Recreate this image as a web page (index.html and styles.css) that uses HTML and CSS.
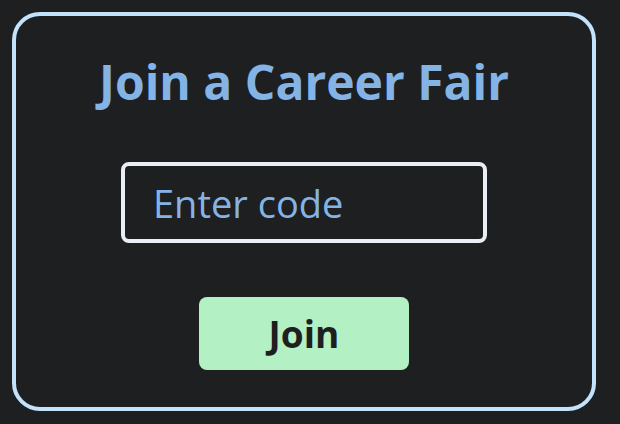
FILE: index.html
```html
<!DOCTYPE html>
<html>
<head>
<meta charset="utf-8">
<link rel="stylesheet" href="styles.css">
</head>
<body>
<div class="card">
  <h1 class="title">Join a Career Fair</h1>
  <input class="code" type="text" placeholder="Enter code">
  <button class="join">Join</button>
</div>
</body>
</html>
```
FILE: styles.css
```css
html, body {
  margin: 0;
  padding: 0;
  background: #1e1f21;
  font-family: "Open Sans", "Noto Sans", sans-serif;
}
.card {
  box-sizing: border-box;
  margin: 12px 0 0 12px;
  width: 584px;
  height: 399px;
  border: 4px solid #c4e3fb;
  border-radius: 28px;
  display: flex;
  flex-direction: column;
  align-items: center;
}
.title {
  margin: 36px 0 0;
  font-size: 48px;
  font-weight: 700;
  line-height: 60px;
  color: #84b4e6;
}
.code {
  box-sizing: border-box;
  margin-top: 50px;
  width: 366px;
  height: 81px;
  border: 4px solid #e9eef4;
  border-radius: 8px;
  background: transparent;
  padding: 0 0 0 28px;
  font-family: inherit;
  font-size: 38px;
  color: #84b4e6;
  outline: none;
}
.code::placeholder {
  color: #84b4e6;
}
.join {
  margin-top: 54px;
  width: 210px;
  height: 73px;
  border: none;
  border-radius: 8px;
  background: #b3f1c5;
  color: #1e1f21;
  font-family: inherit;
  font-size: 37px;
  font-weight: 700;
}
```
